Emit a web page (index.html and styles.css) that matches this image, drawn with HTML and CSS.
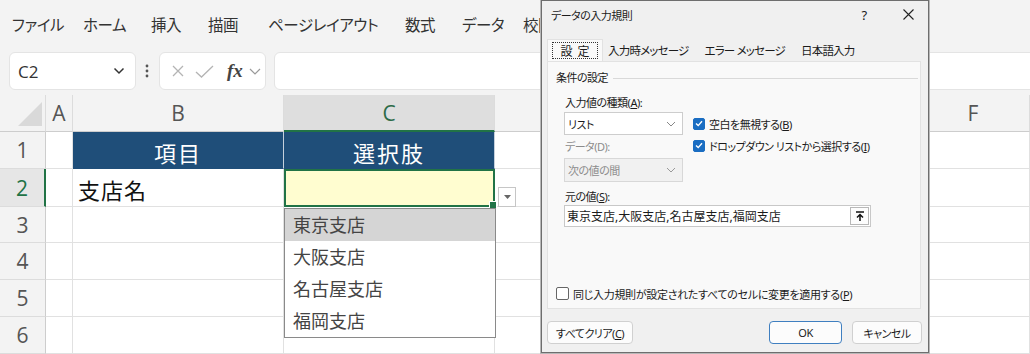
FILE: index.html
```html
<!DOCTYPE html>
<html lang="ja">
<head>
  <meta charset="UTF-8">
  <meta name="viewport" content="width=device-width, initial-scale=1.0">
  <title>データの入力規則</title>
  <link rel="stylesheet" href="styles.css">
</head>
<body>
  <div class="app">
    <nav class="menu">
      <span class="m-file">ファイル</span>
      <span class="m-home">ホーム</span>
      <span class="m-ins">挿入</span>
      <span class="m-draw">描画</span>
      <span class="m-page">ページレイアウト</span>
      <span class="m-calc">数式</span>
      <span class="m-data">データ</span>
      <span>校閲</span>
    </nav>

    <div class="fbar">
      <div class="namebox">
        <span>C2</span>
        <svg width="12" height="8" viewBox="0 0 12 8"><path d="M1.5 1.5 L6 6 L10.5 1.5" fill="none" stroke="#333" stroke-width="1.5"/></svg>
      </div>
      <svg class="dots" width="4" height="16" viewBox="0 0 4 16"><circle cx="2" cy="3" r="1.4"/><circle cx="2" cy="8" r="1.4"/><circle cx="2" cy="13" r="1.4"/></svg>
      <div class="tools">
        <svg width="12" height="12" viewBox="0 0 12 12"><path d="M1 1 L11 11 M11 1 L1 11" stroke="#b4b4b4" stroke-width="1.3"/></svg>
        <svg width="19" height="13" viewBox="0 0 19 13"><path d="M1 7 L6.5 12 L18 1" fill="none" stroke="#b4b4b4" stroke-width="1.3"/></svg>
        <span class="fx">fx</span>
        <svg width="12" height="7" viewBox="0 0 12 7"><path d="M1 1 L6 6 L11 1" fill="none" stroke="#9a9a9a" stroke-width="1.2"/></svg>
      </div>
      <div class="formula"></div>
    </div>

    <div class="sheet">
      <div class="h corner"><svg width="24" height="24" viewBox="0 0 24 24"><polygon points="24,0 24,24 0,24" fill="#d9d9d9"/></svg></div>
      <div class="h">A</div>
      <div class="h">B</div>
      <div class="h on">C</div>
      <div class="h"></div>
      <div class="h"></div>
      <div class="h">F</div>

      <div class="r">1</div>
      <div class="c"></div>
      <div class="c blue">項目</div>
      <div class="c blue">選択肢</div>
      <div class="c"></div>
      <div class="c"></div>
      <div class="c"></div>

      <div class="r on">2</div>
      <div class="c"></div>
      <div class="c txt">支店名</div>
      <div class="c sel"></div>
      <div class="c"></div>
      <div class="c"></div>
      <div class="c"></div>

      <div class="r">3</div>
      <div class="c"></div><div class="c"></div><div class="c"></div><div class="c"></div><div class="c"></div><div class="c"></div>
      <div class="r">4</div>
      <div class="c"></div><div class="c"></div><div class="c"></div><div class="c"></div><div class="c"></div><div class="c"></div>
      <div class="r">5</div>
      <div class="c"></div><div class="c"></div><div class="c"></div><div class="c"></div><div class="c"></div><div class="c"></div>
      <div class="r">6</div>
      <div class="c"></div><div class="c"></div><div class="c"></div><div class="c"></div><div class="c"></div><div class="c"></div>
    </div>

    <div class="dd-btn"><svg width="7" height="4" viewBox="0 0 7 4"><polygon points="0,0 7,0 3.5,4" fill="#666"/></svg></div>
    <ul class="dd-list">
      <li class="hover">東京支店</li>
      <li>大阪支店</li>
      <li>名古屋支店</li>
      <li>福岡支店</li>
    </ul>

    <div class="dialog">
      <div class="dlg-title">
        <span class="dlg-name">データの入力規則</span>
        <span class="dlg-help">?</span>
        <span class="dlg-close"><svg width="11" height="11" viewBox="0 0 11 11"><path d="M0.5 0.5 L10.5 10.5 M10.5 0.5 L0.5 10.5" stroke="#222" stroke-width="1.1"/></svg></span>
      </div>

      <div class="tabs">
        <span class="tab active"><span class="focus">設定</span></span>
        <span class="tab">入力時メッセージ</span>
        <span class="tab">エラー メッセージ</span>
        <span class="tab">日本語入力</span>
      </div>

      <div class="panel">
        <div class="legend"><span>条件の設定</span><i></i></div>

        <div class="cond">
          <div class="lbl">入力値の種類(<u>A</u>):</div>
          <div class="select">
            <span>リスト</span>
            <svg width="10" height="6" viewBox="0 0 10 6"><path d="M1 1 L5 5 L9 1" fill="none" stroke="#888" stroke-width="1"/></svg>
          </div>
          <div class="checks">
            <div class="check"><span class="box on"><svg width="8" height="7" viewBox="0 0 8 7"><path d="M1 3.5 L3.2 5.6 L7 1.2" fill="none" stroke="#fff" stroke-width="1.4"/></svg></span><span>空白を無視する(<u>B</u>)</span></div>
            <div class="check"><span class="box on"><svg width="8" height="7" viewBox="0 0 8 7"><path d="M1 3.5 L3.2 5.6 L7 1.2" fill="none" stroke="#fff" stroke-width="1.4"/></svg></span><span>ドロップダウン リストから選択する(<u>I</u>)</span></div>
          </div>
          <div class="lbl off second">データ(D):</div>
          <div class="select disabled">
            <span>次の値の間</span>
            <svg width="10" height="6" viewBox="0 0 10 6"><path d="M1 1 L5 5 L9 1" fill="none" stroke="#999" stroke-width="1"/></svg>
          </div>
        </div>

        <div class="lbl src-lbl">元の値(<u>S</u>):</div>
        <div class="source">
          <span class="src-text">東京支店,大阪支店,名古屋支店,福岡支店</span>
          <span class="pick"><svg width="10" height="11" viewBox="0 0 10 11"><path d="M1 1 H9" stroke="#111" stroke-width="1.5"/><path d="M5 10 V4 M2 6.5 L5 3.5 L8 6.5" fill="none" stroke="#111" stroke-width="1.5"/></svg></span>
        </div>

        <div class="check apply"><span class="box"></span><span>同じ入力規則が設定されたすべてのセルに変更を適用する(<u>P</u>)</span></div>
      </div>

      <div class="dlg-buttons">
        <span class="btn clear"><span>すべてクリア(<u>C</u>)</span></span>
        <span class="btn ok">OK</span>
        <span class="btn cancel">キャンセル</span>
      </div>
    </div>
  </div>
</body>
</html>
```

FILE: styles.css
```css
* {
  box-sizing: border-box;
}

body {
  margin: 0;
  font-family: "Noto Sans", "Noto Sans CJK JP", sans-serif;
  font-feature-settings: "palt";
  color: #222;
  background: #fff;
}

.app {
  position: relative;
  width: 1030px;
  height: 354px;
  overflow: hidden;
}

/* ribbon tabs */
.menu {
  display: flex;
  align-items: center;
  height: 44px;
  padding: 4px 0 0 12px;
  background: #f3f3f3;
  font-size: 15.5px;
  letter-spacing: -0.4px;
  color: #333;
  white-space: nowrap;
}

.menu span {
  width: 57px;
}

.menu .m-file { width: 71px; }
.menu .m-home { width: 68px; }
.menu .m-draw { width: 60px; }
.menu .m-page { width: 137px; }
.menu .m-data { width: 61px; }

/* formula bar */
.fbar {
  display: flex;
  align-items: stretch;
  height: 51px;
  padding: 8px 0 5px 9px;
  background: #f3f3f3;
}

.namebox {
  display: flex;
  align-items: center;
  justify-content: space-between;
  width: 127px;
  padding: 0 10px 0 8px;
  background: #fff;
  border: 1px solid #e4e4e4;
  border-radius: 6px;
  font-family: "Open Sans", sans-serif;
  font-size: 17px;
  color: #333;
}

.dots {
  align-self: center;
  margin: 0 10px 0 9px;
  fill: #555;
}

.tools {
  display: flex;
  align-items: center;
  width: 107px;
  padding-left: 12px;
  background: #fff;
  border: 1px solid #e4e4e4;
  border-radius: 6px;
}

.tools svg:nth-child(2) {
  margin-left: 11px;
}

.fx {
  margin-left: 13px;
  font-family: "Liberation Serif", serif;
  font-style: italic;
  font-weight: bold;
  font-size: 19px;
  color: #444;
}

.tools svg:last-child {
  margin-left: 6px;
}

.formula {
  flex: 1;
  margin: 0 -10px 0 8px;
  background: #fff;
  border: 1px solid #e4e4e4;
  border-radius: 6px;
}

/* sheet grid */
.sheet {
  display: grid;
  grid-template-columns: 46px 27px 211px 211px 211px 211px 113px;
  grid-template-rows: 37px 37px 38px 36px 37px 37px 37px;
}

.h,
.r {
  display: flex;
  align-items: center;
  justify-content: center;
  background: #f3f3f3;
  font-family: "Open Sans", sans-serif;
  font-size: 21px;
  color: #555;
}

.h {
  border-right: 1px solid #dcdcdc;
  border-bottom: 1px solid #cdcdcd;
}

.h.corner {
  align-items: flex-end;
  justify-content: flex-end;
  padding: 0 3px 5px 0;
}

.h.on {
  background: #dedede;
  border-bottom: 2px solid #217346;
  color: #2d6b47;
}

.r {
  border-right: 1px solid #cdcdcd;
  border-bottom: 1px solid #dcdcdc;
}

.r.on {
  background: #e6e6e6;
  border-right: 2px solid #217346;
  color: #217346;
}

.c {
  border-right: 1px solid #e1e1e1;
  border-bottom: 1px solid #e1e1e1;
}

.c.blue {
  display: flex;
  align-items: center;
  justify-content: center;
  padding-top: 3px;
  background: #1f4e79;
  border-right-color: #c5d0dc;
  border-bottom-color: #1f4e79;
  color: #fff;
  font-size: 22px;
  letter-spacing: 2px;
}

.c.txt {
  display: flex;
  align-items: center;
  padding: 3px 0 0 5px;
  font-size: 22px;
  letter-spacing: 1px;
  color: #111;
}

.c.sel {
  position: relative;
  background: #fffdd0;
  border: 2px solid #217346;
}

.c.sel::after {
  content: "";
  position: absolute;
  right: -4px;
  bottom: -4px;
  width: 6px;
  height: 6px;
  background: #217346;
  border: 1px solid #fff;
}

/* in-cell dropdown */
.dd-btn {
  position: absolute;
  left: 498px;
  top: 187px;
  width: 18px;
  height: 20px;
  display: flex;
  align-items: center;
  justify-content: center;
  background: #fff;
  border: 1px solid #c6c6c6;
}

.dd-list {
  position: absolute;
  left: 284px;
  top: 208px;
  width: 212px;
  margin: 0;
  padding: 0;
  list-style: none;
  background: #fff;
  border: 1px solid #8a8a8a;
}

.dd-list li {
  height: 32px;
  line-height: 32px;
  padding-left: 8px;
  font-size: 18px;
  color: #444;
}

.dd-list li.hover {
  background: #d5d5d5;
}

/* data validation dialog */
.dialog {
  position: absolute;
  left: 541px;
  top: 0;
  width: 388px;
  height: 353px;
  background: #f0f0f0;
  border: 1px solid #6e6e6e;
  box-shadow: 0 0 0 1px #b8b8b8;
  font-size: 11px;
  letter-spacing: -0.5px;
  color: #1b1b1b;
}

.dlg-title {
  display: flex;
  align-items: center;
  height: 27px;
  padding-left: 9px;
}

.dlg-name {
  flex: 1;
}

.dlg-help {
  width: 20px;
  margin-right: 24px;
  text-align: center;
  font-size: 13px;
}

.dlg-close {
  display: flex;
  justify-content: center;
  width: 20px;
  margin-right: 10px;
}

.tabs {
  display: flex;
  height: 22px;
  margin-top: 11px;
  padding-left: 5px;
}

.tab {
  display: flex;
  align-items: center;
  padding: 0 8px;
  font-size: 11.5px;
  letter-spacing: -0.8px;
}

.tab.active {
  width: 56px;
  margin-right: -3px;
  padding: 2px 4px;
  background: #f9f9f9;
  border: 1px solid #e2e2e2;
  border-bottom: none;
}

.focus {
  flex: 1;
  align-self: stretch;
  display: flex;
  align-items: center;
  justify-content: center;
  border: 1px dotted #333;
  font-size: 12px;
  letter-spacing: 5px;
  padding-left: 5px;
}

.panel {
  height: 248px;
  margin: 0 7px 0 5px;
  background: #f9f9f9;
  border: 1px solid #e2e2e2;
}

.legend {
  display: flex;
  align-items: center;
  gap: 5px;
  padding: 8px 2px 0 8px;
  line-height: 16px;
}

.legend i {
  flex: 1;
  height: 1px;
  background: #d9d9d9;
}

.lbl {
  line-height: 16px;
}

.lbl.off {
  color: #8c8c8c;
}

.cond {
  display: grid;
  grid-template-columns: 119px auto;
  column-gap: 10px;
  margin-top: 9px;
  padding-left: 16px;
}

.cond .lbl {
  grid-column: 1;
  padding-left: 1px;
}

.cond .lbl.second {
  margin-top: 4px;
}

.select {
  grid-column: 1;
  display: flex;
  align-items: center;
  justify-content: space-between;
  height: 23px;
  margin-top: 1px;
  padding: 0 6px 0 3px;
  background: #fff;
  border: 1px solid #cdcdcd;
}

.select.disabled {
  height: 24px;
  margin-top: 3px;
  background: #f1f1f1;
  border-color: #d8d8d8;
  color: #8c8c8c;
}

.checks {
  grid-column: 2;
  grid-row: 2 / span 3;
  padding-top: 1px;
}

.check {
  display: flex;
  align-items: center;
  gap: 4px;
  height: 21px;
}

.check:first-child {
  height: 23px;
}

.box {
  display: flex;
  align-items: center;
  justify-content: center;
  flex: none;
  width: 12px;
  height: 12px;
  background: #fff;
  border: 1px solid #555;
  border-radius: 2px;
}

.box.on {
  background: #1a6dc2;
  border-color: #1a6dc2;
}

.src-lbl {
  margin-top: 7px;
  padding-left: 17px;
}

.source {
  display: flex;
  align-items: center;
  justify-content: space-between;
  width: 307px;
  height: 22px;
  margin: 0 0 0 16px;
  padding: 0 1px 0 2px;
  background: #fff;
  border: 1px solid #c8c8c8;
}

.src-text {
  font-size: 12px;
  letter-spacing: 0;
}

.pick {
  display: flex;
  align-items: center;
  justify-content: center;
  width: 19px;
  height: 18px;
  border: 1px solid #b8b8b8;
  background: #fdfdfd;
}

.check.apply {
  margin-top: 56px;
  padding-left: 8px;
  letter-spacing: -0.3px;
}

.apply .box {
  width: 13px;
  height: 13px;
  border-color: #666;
}

.dlg-buttons {
  display: flex;
  height: 23px;
  margin-top: 12px;
  padding: 0 6px 0 5px;
}

.btn {
  display: flex;
  align-items: center;
  justify-content: center;
  height: 23px;
  background: #fcfcfc;
  border: 1px solid #d0d0d0;
  border-radius: 4px;
}

.btn.clear {
  width: 86px;
  margin-right: auto;
}

.btn.ok {
  width: 73px;
  border-color: #3f7fc0;
}

.btn.cancel {
  width: 70px;
  margin-left: 10px;
}
```
